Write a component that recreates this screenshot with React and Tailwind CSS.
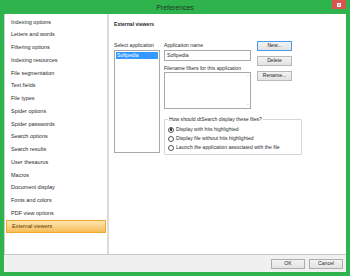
import React from "react";

const items = [
  "Indexing options",
  "Letters and words",
  "Filtering options",
  "Indexing resources",
  "File segmentation",
  "Text fields",
  "File types",
  "Spider options",
  "Spider passwords",
  "Search options",
  "Search results",
  "User thesaurus",
  "Macros",
  "Document display",
  "Fonts and colors",
  "PDF view options",
  "External viewers",
];

function Btn({ children, focused, className = "" }) {
  return (
    <div
      className={
        "flex items-center justify-center h-[10px] w-[35px] text-[5.1px] text-[#222] bg-gradient-to-b from-[#f2f2f2] to-[#e3e3e3] border " +
        (focused ? "border-[#4a9be8]" : "border-[#b8b8b8]") +
        " " +
        className
      }
    >
      {children}
    </div>
  );
}

function Radio({ checked, label }) {
  return (
    <div className="flex items-center h-[9px] gap-[2px]">
      <div className="w-[6px] h-[6px] rounded-full border border-[#555] bg-white flex items-center justify-center">
        {checked && <div className="w-[2.5px] h-[2.5px] rounded-full bg-[#222]" />}
      </div>
      <span>{label}</span>
    </div>
  );
}

export default function App() {
  return (
    <div
      className="w-[350px] h-[276px] bg-[#2fb34c] flex flex-col text-[#2a2a2a] leading-none"
      style={{ fontFamily: '"Liberation Sans", Arial, sans-serif' }}
    >
      {/* title bar */}
      <div className="h-[14px] relative flex items-center justify-center shrink-0">
        <span className="text-[7px] text-[#1f3a25]">Preferences</span>
        <div className="absolute right-[4px] top-0 w-[14px] h-[9px] bg-[#d9534f] flex items-center justify-center">
          <div className="w-[4px] h-[4px] border border-white bg-[#f0b0b0]" />
        </div>
      </div>

      {/* body */}
      <div className="flex-1 mx-[4px] mb-[4px] bg-[#f0f0f0] flex flex-col">
        <div className="flex h-[241px] border-b border-[#c8c8c8]">
          {/* left list */}
          <div className="w-[103px] bg-white border-l border-[#cfcfcf] pt-[2px] px-[1px] text-[5.5px]">
            {items.map((t, i) => {
              const sel = i === items.length - 1;
              return (
                <div
                  key={t}
                  className={
                    "h-[12.75px] flex items-center pl-[5px] " +
                    (sel
                      ? "bg-gradient-to-b from-[#fde6b0] to-[#f7bd55] border border-[#f0a830] text-[#5a3a00]"
                      : "")
                  }
                >
                  {t}
                </div>
              );
            })}
          </div>
          <div className="w-[2px] bg-[#dadada]" />
          {/* right pane */}
          <div className="flex-1 bg-white pl-[5px] text-[5.1px]">
            <div className="mt-[7px] h-[7px] font-bold flex items-center">External viewers</div>
            <div className="flex mt-[14px]">
              {/* col 1 */}
              <div className="flex flex-col">
                <div className="h-[7px] flex items-center">Select application</div>
                <div className="mt-[1px] w-[46px] h-[103px] border border-[#a9a9a9] bg-white p-[1px]">
                  <div className="h-[7px] bg-[#3399ff] text-white flex items-center pl-[1px]">Softpedia</div>
                </div>
              </div>
              {/* col 2 */}
              <div className="ml-[4px] flex flex-col">
                <div className="flex">
                  <div className="flex flex-col">
                    <div className="h-[7px] flex items-center">Application name</div>
                    <div className="mt-[1px] w-[87px] h-[11px] border border-[#a9a9a9] flex items-center pl-[2px]">
                      Softpedia
                    </div>
                    <div className="mt-[4px] h-[7px] flex items-center">Filename filters for this application</div>
                    <div className="w-[87px] h-[37px] border border-[#a9a9a9] flex justify-end">
                      <div className="w-[6px] flex flex-col justify-between items-center py-[2px] text-[#b0b0b0] text-[4px]">
                        <span>⌃</span>
                        <span>⌄</span>
                      </div>
                    </div>
                  </div>
                  <div className="ml-[6px] flex flex-col gap-[5px] -mt-[1px]">
                    <Btn focused>New...</Btn>
                    <Btn>Delete</Btn>
                    <Btn>Rename...</Btn>
                  </div>
                </div>
                <div className="relative mt-[10px] w-[138px] h-[36px] border border-[#d5d5d5] rounded-[1px] pt-[5px] pl-[3px]">
                  <span className="absolute -top-[4px] left-[3px] bg-white px-[1px] h-[7px] flex items-center">
                    How should dtSearch display these files?
                  </span>
                  <Radio checked label="Display with hits highlighted" />
                  <Radio label="Display file without hits highlighted" />
                  <Radio label="Launch the application associated with the file" />
                </div>
              </div>
            </div>
          </div>
        </div>
        {/* bottom bar */}
        <div className="flex-1 flex items-center justify-end gap-[4px] pr-[3px]">
          <div className="w-[34px] h-[10px] border border-[#adadad] bg-gradient-to-b from-[#f2f2f2] to-[#e3e3e3] text-[5.1px] flex items-center justify-center">
            OK
          </div>
          <div className="w-[34px] h-[10px] border border-[#adadad] bg-gradient-to-b from-[#f2f2f2] to-[#e3e3e3] text-[5.1px] flex items-center justify-center">
            Cancel
          </div>
        </div>
      </div>
    </div>
  );
}
